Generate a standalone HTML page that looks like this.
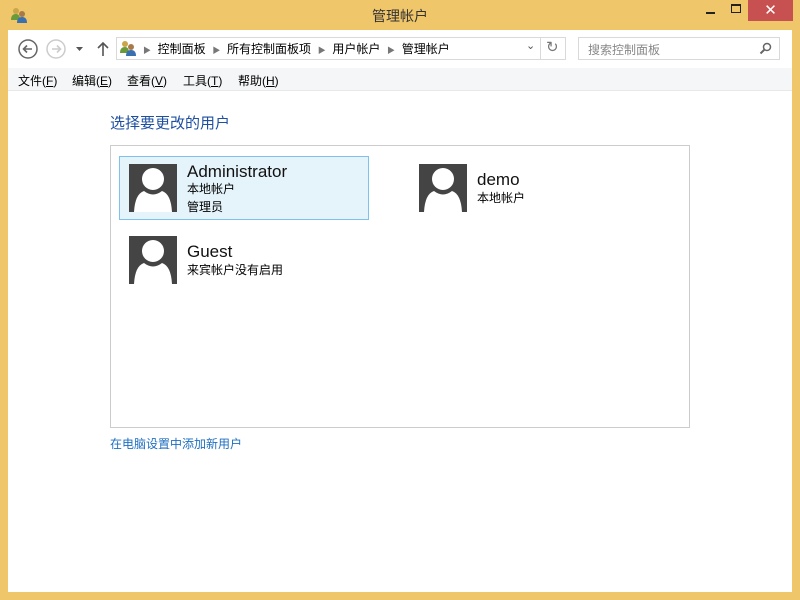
<!DOCTYPE html>
<html><head><meta charset="utf-8"><style>
*{margin:0;padding:0;box-sizing:border-box}
body{width:800px;height:600px;background:#f0c66b;font-family:"Liberation Sans","Noto Sans CJK SC",sans-serif;position:relative;overflow:hidden;font-size:12px;color:#000}
.abs{position:absolute}
.client{position:absolute;left:8px;top:30px;width:784px;height:562px;background:#fff}
.title{left:0;top:6px;width:800px;text-align:center;font-size:14px;color:#333}
.menu{left:8px;top:68px;width:784px;height:23px;background:#f5f6f7;border-bottom:1px solid #e8e8e8}
.menu span{position:absolute;top:4px;font-size:12px}
.av{position:absolute;width:48px;height:48px;background:#444;overflow:hidden}
.name{position:absolute;font-size:17px;color:#111}
.sub{position:absolute;font-size:12px;line-height:18px}
</style></head><body>
<svg class="abs" style="left:10px;top:7px" width="18" height="16"><circle cx="6" cy="4" r="3" fill="#c9a64a"/><path d="M1 13 Q1 7 6 7 Q10 7 10 13Z" fill="#6a9a3a"/><circle cx="12" cy="7" r="3" fill="#a87a4a"/><path d="M7 16 Q7 10 12 10 Q17 10 17 16Z" fill="#3a6fb0"/></svg>
<div class="abs title">管理帐户</div>
<div class="abs" style="left:706px;top:12px;width:9px;height:2px;background:#222"></div>
<div class="abs" style="left:731px;top:4px;width:10px;height:9px;border:1px solid #222;border-top-width:2px"></div>
<div class="abs" style="left:748px;top:0;width:45px;height:21px;background:#c75050;color:#fff;text-align:center;font-size:15px;line-height:21px">✕</div>
<div class="client"></div>
<svg class="abs" style="left:17px;top:38px" width="80" height="22"><circle cx="11" cy="11" r="9" fill="none" stroke="#666" stroke-width="1.5"/><path d="M15 11H7M10 7.5L6.5 11L10 14.5" stroke="#666" stroke-width="1.6" fill="none"/><circle cx="39" cy="11" r="9" fill="none" stroke="#ccc" stroke-width="1.5"/><path d="M35 11H43M40 7.5L43.5 11L40 14.5" stroke="#ccc" stroke-width="1.6" fill="none"/><path d="M59 9L66 9L62.5 13Z" fill="#555"/></svg>
<svg class="abs" style="left:96px;top:41px" width="14" height="16"><path d="M7 2V15M2 7L7 2L12 7" stroke="#555" stroke-width="1.6" fill="none"/></svg>
<div class="abs" style="left:116px;top:37px;width:450px;height:23px;border:1px solid #d9d9d9"></div>
<div class="abs" style="left:540px;top:37px;width:1px;height:23px;background:#d9d9d9"></div>
<svg class="abs" style="left:119px;top:40px" width="18" height="16"><circle cx="6" cy="4" r="3" fill="#c9a64a"/><path d="M1 13 Q1 7 6 7 Q10 7 10 13Z" fill="#6a9a3a"/><circle cx="12" cy="7" r="3" fill="#a87a4a"/><path d="M7 16 Q7 10 12 10 Q17 10 17 16Z" fill="#3a6fb0"/></svg>
<div class="abs" style="left:143px;top:40px;font-size:12px;white-space:pre"><span style="color:#777;font-size:8px">▶</span>  控制面板  <span style="color:#777;font-size:8px">▶</span>  所有控制面板项  <span style="color:#777;font-size:8px">▶</span>  用户帐户  <span style="color:#777;font-size:8px">▶</span>  管理帐户</div>
<div class="abs" style="left:526px;top:39px;color:#555;font-size:11px">⌄</div>
<div class="abs" style="left:546px;top:38px;color:#777;font-size:15px">↻</div>
<div class="abs" style="left:578px;top:37px;width:202px;height:23px;border:1px solid #d9d9d9"></div>
<div class="abs" style="left:588px;top:41px;color:#888">搜索控制面板</div>
<svg class="abs" style="left:759px;top:42px" width="13" height="13"><circle cx="8" cy="5" r="3.5" fill="none" stroke="#666" stroke-width="1.5"/><path d="M5.5 7.5L1.5 11.5" stroke="#666" stroke-width="2"/></svg>
<div class="abs menu"><span style="left:10px">文件(<u>F</u>)</span><span style="left:64px">编辑(<u>E</u>)</span><span style="left:119px">查看(<u>V</u>)</span><span style="left:175px">工具(<u>T</u>)</span><span style="left:230px">帮助(<u>H</u>)</span></div>
<div class="abs" style="left:110px;top:112px;font-size:15px;color:#1e4fa0">选择要更改的用户</div>
<div class="abs" style="left:110px;top:145px;width:580px;height:283px;border:1px solid #ccc"></div>
<div class="abs" style="left:119px;top:156px;width:250px;height:64px;background:#e5f3fb;border:1px solid #7dc2ea"></div>
<svg width="0" height="0" style="position:absolute"><defs><symbol id="p" viewBox="0 0 48 48"><circle cx="24" cy="15" r="11" fill="#fff"/><path d="M5 48 Q6 30 15 27 Q24 34 33 27 Q42 30 43 48Z" fill="#fff"/></symbol></defs></svg>
<div class="av" style="left:129px;top:164px"><svg width="48" height="48"><use href="#p"/></svg></div>
<div class="av" style="left:419px;top:164px"><svg width="48" height="48"><use href="#p"/></svg></div>
<div class="av" style="left:129px;top:236px"><svg width="48" height="48"><use href="#p"/></svg></div>
<div class="name" style="left:187px;top:162px">Administrator</div>
<div class="sub" style="left:187px;top:180px">本地帐户<br>管理员</div>
<div class="name" style="left:477px;top:170px">demo</div>
<div class="sub" style="left:477px;top:189px">本地帐户</div>
<div class="name" style="left:187px;top:242px">Guest</div>
<div class="sub" style="left:187px;top:261px">来宾帐户没有启用</div>
<div class="abs" style="left:110px;top:435px;color:#1e6fc0">在电脑设置中添加新用户</div>
</body></html>
